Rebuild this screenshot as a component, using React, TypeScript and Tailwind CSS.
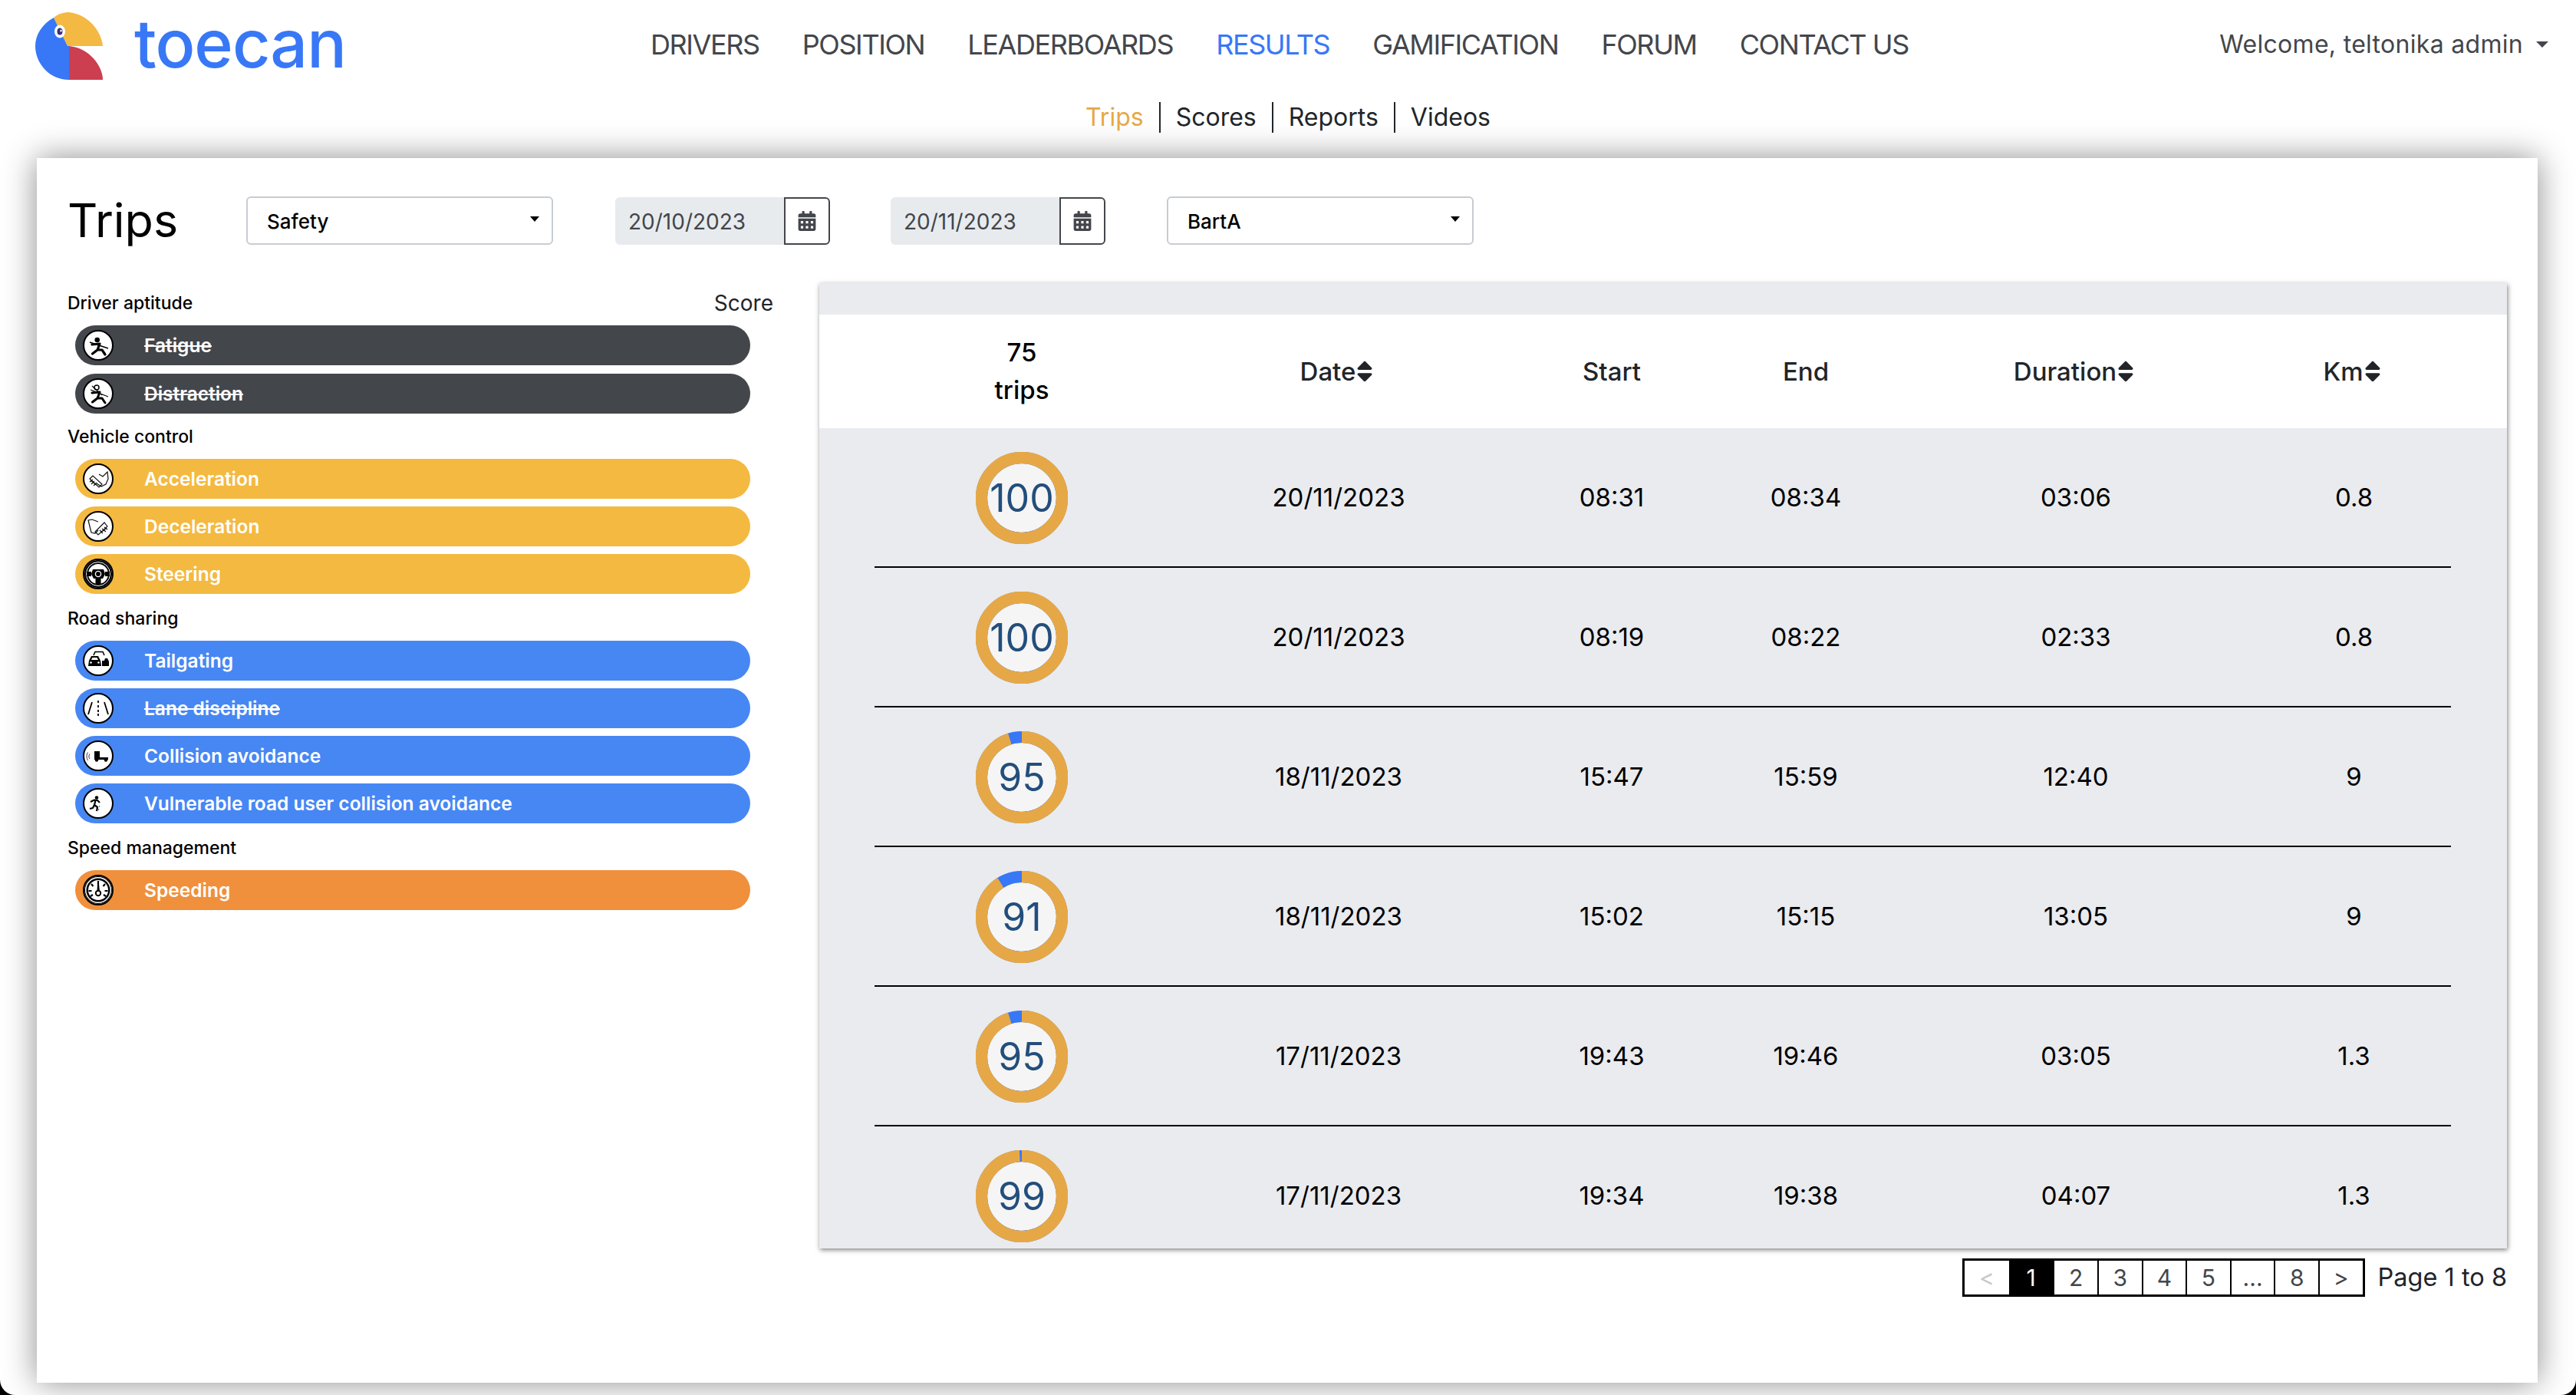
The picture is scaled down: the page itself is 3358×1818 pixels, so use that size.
import React from "react";
import { FaCalendarAlt, FaSort } from "react-icons/fa";

const navItems = ["DRIVERS", "POSITION", "LEADERBOARDS", "RESULTS", "GAMIFICATION", "FORUM", "CONTACT US"];

const trips = [
  { score: 100, date: "20/11/2023", start: "08:31", end: "08:34", duration: "03:06", km: "0.8" },
  { score: 100, date: "20/11/2023", start: "08:19", end: "08:22", duration: "02:33", km: "0.8" },
  { score: 95, date: "18/11/2023", start: "15:47", end: "15:59", duration: "12:40", km: "9" },
  { score: 91, date: "18/11/2023", start: "15:02", end: "15:15", duration: "13:05", km: "9" },
  { score: 95, date: "17/11/2023", start: "19:43", end: "19:46", duration: "03:05", km: "1.3" },
  { score: 99, date: "17/11/2023", start: "19:34", end: "19:38", duration: "04:07", km: "1.3" },
];

const Logo = () => (
  <svg width="88" height="88" viewBox="0 0 88 88">
    <path d="M24 7C30 2 36 0 44 0C70 3 86 25 88 44L42 44Z" fill="#f4b942" />
    <path d="M44 44C70 46 88 70 88 88L44 88Z" fill="#cb3f50" />
    <path d="M24 7C8 16 0 30 0 44C0 66 18 88 44 88L44 44L42 44Z" fill="#3878f6" />
    <ellipse cx="32" cy="25" rx="7" ry="8.5" fill="#fff" />
    <ellipse cx="32" cy="25" rx="3.5" ry="4.5" fill="#3d2f7c" />
    <ellipse cx="33.5" cy="24" rx="1.2" ry="1.6" fill="#fff" />
  </svg>
);

const Caret = () => <span className="h-0 w-0 border-x-[6px] border-t-[7px] border-x-transparent border-t-black" />;

const Select = ({ value }: { value: string }) => (
  <div className="flex h-[63px] w-[400px] items-center justify-between rounded-md border-2 border-[#c8ccd1] pl-[25px] pr-[16px] pt-[2px] text-[26px] font-medium text-black">
    {value}
    <span className="mb-[6px] flex">
      <Caret />
    </span>
  </div>
);

const DateInput = ({ value }: { value: string }) => (
  <div className="flex h-[62px] w-[280px]">
    <div className="flex flex-1 items-center rounded-l-md bg-[#e8ebee] pl-[17px] pt-[2px] text-[28px] text-[#43464b]">{value}</div>
    <div className="flex w-[60px] items-center justify-center rounded-r-md border-2 border-[#43464b] bg-white text-[#43464b]">
      <FaCalendarAlt size={26} />
    </div>
  </div>
);

// small pictograms, coordinates are on the 40px circle
const icons: Record<string, React.ReactNode> = {
  fatigue: (
    <>
      <circle cx="18.7" cy="13" r="3.3" fill="#000" />
      <path d="M12 19L22 18L19 26L12.5 31M19 26L25 26L29 32" fill="none" stroke="#000" strokeWidth="3.2" strokeLinecap="round" strokeLinejoin="round" />
      <path d="M9 16L33 24" stroke="#000" strokeWidth="1.6" />
    </>
  ),
  distraction: (
    <>
      <circle cx="18" cy="12" r="3" fill="none" stroke="#000" strokeWidth="1.5" />
      <path d="M12 19L22 18L19 26L12.5 31M19 26L25 26L29 32" fill="none" stroke="#000" strokeWidth="3" strokeLinecap="round" strokeLinejoin="round" />
      <path d="M10 15L33 24M12 10L25 22" stroke="#000" strokeWidth="1.2" />
    </>
  ),
  acceleration: (
    <g fill="none" stroke="#111" strokeWidth="1.2">
      <path d="M21 14L26 17L32 11L33 20L30 27L24 30L18 26" />
      <path d="M9 20L13 16L25 27L21 31ZM9 24L13 21M11 27L15 23M14 29L18 25M10 22L19 29" />
    </g>
  ),
  deceleration: (
    <g fill="none" stroke="#111" strokeWidth="1.2">
      <path d="M20 14L12 11L7 12L9 20L11 28L16 29L20 25" />
      <path d="M32 20L28 15L16 27L20 31ZM32 24L28 21M30 27L25 23M26 29L22 25M31 22L22 29" />
    </g>
  ),
  steering: (
    <>
      <circle cx="20" cy="20" r="20" fill="#000" />
      <circle cx="20" cy="20" r="15.5" fill="none" stroke="#fff" strokeWidth="1" />
      <circle cx="20" cy="20" r="13" fill="#fff" />
      <path d="M5 17H11V23H5ZM29 17H35V23H29Z" fill="#000" />
      <path d="M13 14H27L29 20L26 26H23.5V34H16.5V26H14L11 20Z" fill="#000" />
      <circle cx="20" cy="20" r="3.6" fill="none" stroke="#fff" strokeWidth="1.4" />
    </>
  ),
  tailgating: (
    <>
      <path d="M14 13L16 8.5H26L28 13" fill="none" stroke="#000" strokeWidth="1.6" />
      <path d="M8 20L11 14H20L23 20L24 27H7Z" fill="#000" />
      <path d="M12.5 16H18.5L20 19H11Z" fill="#fff" />
      <path d="M25 20H28L29 17H32L34 21V27H25Z" fill="#000" />
      <circle cx="10.5" cy="22.5" r="1.3" fill="#fff" />
      <circle cx="20.5" cy="22.5" r="1.3" fill="#fff" />
    </>
  ),
  lane: (
    <path d="M12 12L7 28M20 10V13M20 16V19M20 22V25M20 27V30M28 12L33 28" stroke="#000" strokeWidth="1.8" fill="none" />
  ),
  collision: (
    <>
      <path d="M9 17.5C7.5 19.5 7.5 22 9 24M6.5 15.5C4.5 19 4.5 22.5 6.5 26" fill="none" stroke="#333" strokeWidth="1" />
      <path d="M15 14H22V22H33V25H15Z" fill="#000" />
      <circle cx="18" cy="25.5" r="2.2" fill="#000" />
      <circle cx="30" cy="25.5" r="2.2" fill="#000" />
    </>
  ),
  vulnerable: (
    <>
      <circle cx="18" cy="12.5" r="2.3" fill="#000" />
      <path d="M10 18L15 15.5L19 16L22 19M16.5 16L15 22L19 25L18 30M15 22L13 26L9 27" fill="none" stroke="#000" strokeWidth="2.2" strokeLinejoin="round" />
      <path d="M22 23L21 25M21 27L20 29" stroke="#555" strokeWidth="1" />
    </>
  ),
  speeding: (
    <>
      <circle cx="20" cy="20" r="20" fill="#000" />
      <circle cx="20" cy="20" r="17" fill="#fff" />
      <circle cx="20" cy="20" r="15.5" fill="#000" />
      <circle cx="20" cy="20" r="13" fill="#fff" />
      <path d="M20 8V12M11 12L13.5 15M29 12L26.5 15M7.5 21H11.5M28.5 21H32.5M10 28L13 26M30 28L27 26" stroke="#000" strokeWidth="2.2" />
      <path d="M18.5 22L19 12L21 12L22 22" fill="#000" />
      <circle cx="20" cy="24" r="3.2" fill="#fff" stroke="#000" strokeWidth="2" />
    </>
  ),
};

const Pill = ({ icon, label, bg, off }: { icon: string; label: string; bg: string; off?: boolean }) => (
  <div className={`flex h-[52px] w-[880px] items-center rounded-full pl-[10px] text-[24.5px] font-semibold text-white ${bg}`}>
    <svg width="40" height="40" viewBox="2 2 36 36" className="shrink-0 rounded-full border-2 border-black bg-white">
      {icons[icon]}
    </svg>
    <span className={`ml-[40px] ${off ? "line-through" : ""}`}>{label}</span>
  </div>
);

const GroupLabel = ({ children }: { children: React.ReactNode }) => (
  <div className="text-[23px] font-medium leading-[26px] text-black">{children}</div>
);

const Gauge = ({ score }: { score: number }) => {
  const r = 52.5;
  const c = 2 * Math.PI * r;
  return (
    <div className="grid h-[120px] w-[120px] place-items-center">
      <svg width="120" height="120" viewBox="0 0 120 120" className="[grid-area:1/1]">
        <circle cx="60" cy="60" r="59.5" fill="#3878f6" />
        <circle cx="60" cy="60" r="45" fill="#f5f5f5" />
        <circle cx="60" cy="60" r={r} fill="none" stroke="#3878f6" strokeWidth="15" />
        <circle
          cx="60"
          cy="60"
          r={r}
          fill="none"
          stroke="#e6a846"
          strokeWidth="15.5"
          strokeDasharray={`${(c * score) / 100} ${c}`}
          transform="rotate(-90 60 60)"
        />
      </svg>
      <span className="[grid-area:1/1] text-[50px] leading-none text-[#234e7c]">{score}</span>
    </div>
  );
};

const SortHead = ({ label }: { label: string }) => (
  <span className="flex items-center justify-center">
    {label}
    <FaSort size={34} className="-ml-[5px] -mr-[1px]" />
  </span>
);

const pages = ["<", "1", "2", "3", "4", "5", "...", "8", ">"];

export default function App() {
  return (
    <div className="h-[1818px] w-[3358px] overflow-hidden bg-black font-['Inter',sans-serif]">
      <div className="h-full overflow-hidden rounded-b-[20px] bg-white">
        <header className="flex h-[116px] items-start">
          <div className="ml-[46px] mt-[16px] flex items-center">
            <Logo />
            <span className="-mt-[6px] ml-[41px] text-[86px] font-medium leading-none tracking-[-1px] text-[#3878f6]">toecan</span>
          </div>
          <nav className="ml-[397px] mt-[38px] flex gap-[56px] text-[36px] leading-[40px] tracking-[-1.4px] text-[#43464b]">
            {navItems.map((n) => (
              <span key={n} className={n === "RESULTS" ? "text-[#3878f6]" : ""}>
                {n}
              </span>
            ))}
          </nav>
          <div className="ml-auto mr-[36px] mt-[40px] flex items-center gap-[17px] text-[32px] leading-[36px] tracking-[0.3px] text-[#43464b]">
            Welcome, teltonika admin
            <span className="h-0 w-0 border-x-[8px] border-t-[8px] border-x-transparent border-t-[#43464b]" />
          </div>
        </header>

        <div className="mt-[17px] flex h-[40px] items-center justify-center text-[32px] leading-none text-[#212529]">
          <span className="flex h-full items-center border-r-2 border-[#212529] pr-[20px] text-[#e6a846]">Trips</span>
          <span className="flex h-full items-center border-r-2 border-[#212529] px-[20px]">Scores</span>
          <span className="flex h-full items-center border-r-2 border-[#212529] px-[20px]">Reports</span>
          <span className="flex h-full items-center pl-[20px]">Videos</span>
        </div>

        <main className="ml-[48px] mt-[33px] h-[1596px] w-[3260px] bg-white px-[40px] pt-[50px] shadow-[0_0_40px_rgba(0,0,0,0.45)]">
          <div className="flex h-[63px] items-center">
            <h1 className="w-[233px] text-[61px] leading-none text-black">Trips</h1>
            <Select value="Safety" />
            <div className="ml-[81px]">
              <DateInput value="20/10/2023" />
            </div>
            <div className="ml-[79px]">
              <DateInput value="20/11/2023" />
            </div>
            <div className="ml-[80px]">
              <Select value="BartA" />
            </div>
          </div>

          <div className="mt-[50px] flex items-start justify-between">
            <section className="w-[920px] pt-[13px]">
              <div className="flex items-center justify-between">
                <GroupLabel>Driver aptitude</GroupLabel>
                <span className="text-[28px] leading-[26px] text-[#212529]">Score</span>
              </div>
              <div className="ml-[10px] mt-[16px] flex flex-col gap-[11px]">
                <Pill icon="fatigue" label="Fatigue" bg="bg-[#43464b]" off />
                <Pill icon="distraction" label="Distraction" bg="bg-[#43464b]" off />
              </div>
              <div className="mt-[17px]">
                <GroupLabel>Vehicle control</GroupLabel>
              </div>
              <div className="ml-[10px] mt-[16px] flex flex-col gap-[10px]">
                <Pill icon="acceleration" label="Acceleration" bg="bg-[#f4b940]" />
                <Pill icon="deceleration" label="Deceleration" bg="bg-[#f4b940]" />
                <Pill icon="steering" label="Steering" bg="bg-[#f4b940]" />
              </div>
              <div className="mt-[19px]">
                <GroupLabel>Road sharing</GroupLabel>
              </div>
              <div className="ml-[10px] mt-[16px] flex flex-col gap-[10px]">
                <Pill icon="tailgating" label="Tailgating" bg="bg-[#4787f3]" />
                <Pill icon="lane" label="Lane discipline" bg="bg-[#4787f3]" off />
                <Pill icon="collision" label="Collision avoidance" bg="bg-[#4787f3]" />
                <Pill icon="vulnerable" label="Vulnerable road user collision avoidance" bg="bg-[#4787f3]" />
              </div>
              <div className="mt-[19px]">
                <GroupLabel>Speed management</GroupLabel>
              </div>
              <div className="ml-[10px] mt-[16px]">
                <Pill icon="speeding" label="Speeding" bg="bg-[#f0903c]" />
              </div>
            </section>

            <section className="w-[2200px]">
              <div className="h-[1258px] overflow-hidden bg-[#e9ebef] shadow-[1px_2px_6px_rgba(0,0,0,0.5)]">
                <div className="mt-[41px] bg-white pl-[72px] pr-[73px]">
                  <div className="grid h-[148px] grid-cols-[384px_442px_270px_236px_468px_257px] items-center text-center text-[33px] font-medium leading-[49px] text-[#212529]">
                    <span className="text-black">
                      75
                      <br />
                      trips
                    </span>
                    <SortHead label="Date" />
                    <span>Start</span>
                    <span>End</span>
                    <SortHead label="Duration" />
                    <SortHead label="Km" />
                  </div>
                </div>
                <div className="pl-[72px] pr-[73px]">
                  {trips.map((t, i) => (
                    <div
                      key={i}
                      className="grid h-[182px] grid-cols-[384px_442px_270px_236px_468px_257px] items-center border-b-2 border-black pt-[1px] text-center text-[33px] text-black"
                    >
                      <span className="flex justify-center">
                        <Gauge score={t.score} />
                      </span>
                      <span>{t.date}</span>
                      <span>{t.start}</span>
                      <span>{t.end}</span>
                      <span>{t.duration}</span>
                      <span>{t.km}</span>
                    </div>
                  ))}
                </div>
              </div>

              <div className="mt-[13px] flex items-center justify-end gap-[17px]">
                <div className="flex h-[50px] border-[3px] border-black text-[30px] text-[#43464b]">
                  {pages.map((p, i) => (
                    <span
                      key={p}
                      className={`flex w-[57.6px] items-center justify-center ${i > 1 ? "border-l-2 border-black" : ""} ${
                        p === "1" ? "bg-black text-white" : p === "<" ? "text-[#c8c8c8]" : ""
                      }`}
                    >
                      {p}
                    </span>
                  ))}
                </div>
                <span className="text-[32.5px] text-[#212529]">Page 1 to 8</span>
              </div>
            </section>
          </div>
        </main>
      </div>
    </div>
  );
}
